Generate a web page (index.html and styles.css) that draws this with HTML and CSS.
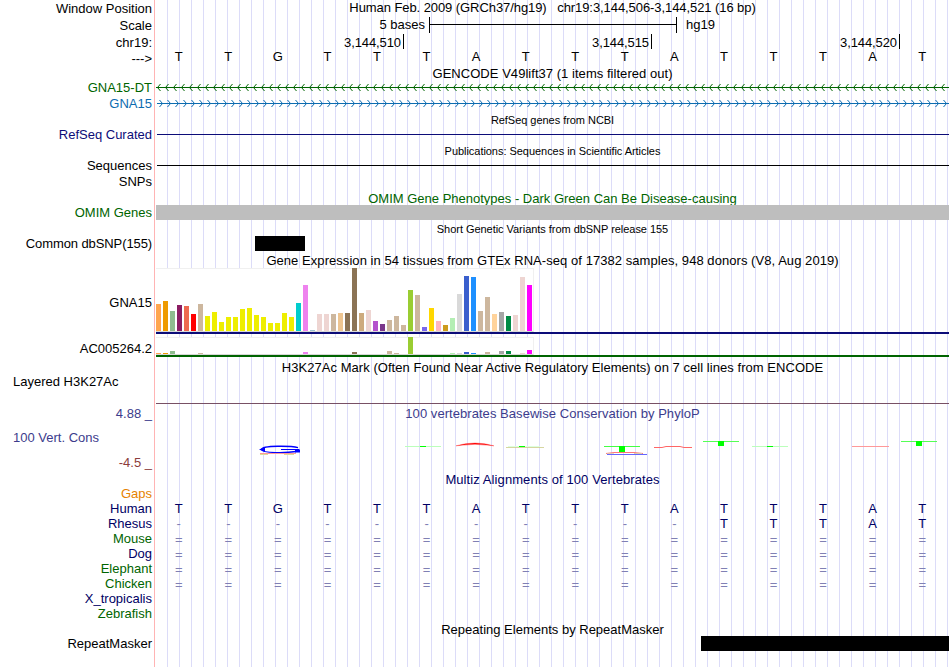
FILE: index.html
```html
<!DOCTYPE html>
<html lang="en">
<head>
    <meta charset="UTF-8">
    <title>Genome Browser</title>
    <link rel="stylesheet" href="styles.css">
</head>
<body>
<div class="browser">
    <div class="row h17 down1"><div class="label">Window Position</div><div class="title wide">Human Feb. 2009 (GRCh37/hg19)   chr19:3,144,506-3,144,521 (16 bp)</div></div>
    <div class="row h17 down1">
        <div class="label">Scale</div>
        <div class="track scale"><span class="from">5 bases</span><span class="ruler"></span><span>hg19</span></div>
    </div>
    <div class="row h15 down1">
        <div class="label">chr19:</div>
        <div class="track ticks"><span>3,144,510</span><span>3,144,515</span><span>3,144,520</span></div>
    </div>
    <div class="row h15 down2"><div class="label">---&gt;</div><div class="bases" data-seq="TTGTTTATTTATTTAT"></div></div>

    <div class="row h16 head"><div class="title gencode">GENCODE V49lift37 (1 items filtered out)</div></div>
    <div class="row h16 green">
        <div class="label">GNA15-DT</div>
        <svg class="track" width="793" height="16">
            <defs><pattern id="minus" x="1" width="8" height="16" patternUnits="userSpaceOnUse"><path d="M3.5 4L.5 7.5L3.5 11" fill="none" stroke="#006400"/></pattern></defs>
            <rect x="1" width="790" height="16" fill="url(#minus)"/>
            <rect y="7" width="793" height="1" fill="#006400"/>
        </svg>
    </div>
    <div class="row h15 blue">
        <div class="label">GNA15</div>
        <svg class="track" width="793" height="15">
            <defs><pattern id="plus" x="3" width="8" height="15" patternUnits="userSpaceOnUse"><path d="M.5 4L3.5 7.5L.5 11" fill="none" stroke="#0c6cb0"/></pattern></defs>
            <rect x="1" width="792" height="15" fill="url(#plus)"/>
            <rect x="1" y="7" width="792" height="1" fill="#0c6cb0"/>
        </svg>
    </div>

    <div class="row h16 head"><div class="title small">RefSeq genes from NCBI</div></div>
    <div class="row h15 navy"><div class="label">RefSeq Curated</div><div class="track"><div class="line"></div></div></div>

    <div class="row h16 head"><div class="title small">Publications: Sequences in Scientific Articles</div></div>
    <div class="row h16"><div class="label">Sequences</div><div class="track"><div class="line"></div></div></div>
    <div class="row h15"><div class="label">SNPs</div></div>

    <div class="row h16 head green"><div class="title omim">OMIM Gene Phenotypes - Dark Green Can Be Disease-causing</div></div>
    <div class="row h15 green"><div class="label">OMIM Genes</div><div class="track gray"></div></div>

    <div class="row h16 head"><div class="title small">Short Genetic Variants from dbSNP release 155</div></div>
    <div class="row h15"><div class="label dbsnp">Common dbSNP(155)</div><div class="track"><div class="item snp"></div></div></div>

    <div class="row h17 head"><div class="title gtex">Gene Expression in 54 tissues from GTEx RNA-seq of 17382 samples, 948 donors (V8, Aug 2019)</div></div>
    <div class="row expr">
        <div class="label">GNA15</div>
        <div class="track"><div class="bars" id="gna15"></div></div>
    </div>
    <div class="row expr low">
        <div class="label">AC005264.2</div>
        <div class="track"><div class="bars" id="ac005264"></div></div>
    </div>

    <div class="row h17 head down3"><div class="title h3k">H3K27Ac Mark (Often Found Near Active Regulatory Elements) on 7 cell lines from ENCODE</div></div>
    <div class="row h3k27ac"><div class="label">Layered H3K27Ac</div><div class="track"></div></div>

    <div class="row cons">
        <div class="label">
            <span class="max">4.88 _</span>
            <span class="name">100 Vert. Cons</span>
            <span class="min">-4.5 _</span>
        </div>
        <div class="track">
            <div class="title phylop">100 vertebrates Basewise Conservation by PhyloP</div>
            <svg width="793" height="50" viewBox="156 421 793 50">
                <!-- G -->
                <path d="M298 447.6C292 446 262 445 261.500 449.500C262 453.500 287 453 296 451.500" fill="none" stroke="#00f" stroke-width="1.300"/>
                <path d="M259 449.500L265 447V452Z" fill="#00f"/>
                <path d="M281 449.500H299" stroke="#00f"/>
                <rect x="295" y="449.500" width="5" height="3" fill="#00f"/>
                <path d="M260 453.500H296" stroke="#f99"/>
                <path d="M260 454.500H268M284 454.500H294" stroke="#dd9"/>
                <!-- T -->
                <path d="M405 446.500H441" stroke="#bfb"/>
                <path d="M420 446.500H426" stroke="#0f0"/>
                <!-- A -->
                <path d="M456 445.800Q475 440.200 494 445.800Q475 442.800 456 445.800Z" fill="#f00" stroke="#f00" stroke-width=".3"/>
                <path d="M506 447.500H544" stroke="#cc8" stroke-opacity=".8"/>
                <path d="M508 446.500H540" stroke="#dfd"/>
                <path d="M519 446.500H525" stroke="#0f0"/>
                <path d="M604 446.500H640" stroke="#4f4"/>
                <rect x="619" y="446" width="6" height="6" fill="#0f0"/>
                <path d="M606 453.500L614 452.500H634L643 453.500" fill="none" stroke="#f77"/>
                <path d="M607 453.800H614M634 453.500H642" stroke="#dca"/>
                <path d="M607 454.500H647" stroke="#66f"/>
                <path d="M654 447.500H662L666 446.500H680L684 447.500H692" fill="none" stroke="#f66"/>
                <path d="M703 441.500H739M901 441.500H937" stroke="#5f5"/>
                <path d="M718 441H724V446H718ZM916 441H922V446H916Z" fill="#0f0"/>
                <path d="M752 446.500H788" stroke="#bfb"/>
                <path d="M767 446.500H773" stroke="#0f0"/>
                <path d="M852 446.500H889" stroke="#f99"/>
            </svg>
        </div>
    </div>

    <div class="row h15 head dark down1"><div class="title multiz">Multiz Alignments of 100 Vertebrates</div></div>
    <div class="row h15 orange"><div class="label">Gaps</div></div>
    <div class="row h15 dark"><div class="label">Human</div><div class="bases" data-seq="TTGTTTATTTATTTAT"></div></div>
    <div class="row h15 dark"><div class="label">Rhesus</div><div class="bases" data-seq="-----------TTTAT"></div></div>
    <div class="row h15 green"><div class="label">Mouse</div><div class="bases" data-seq="================"></div></div>
    <div class="row h15 dark"><div class="label">Dog</div><div class="bases" data-seq="================"></div></div>
    <div class="row h15 green"><div class="label">Elephant</div><div class="bases" data-seq="================"></div></div>
    <div class="row h15 green"><div class="label">Chicken</div><div class="bases" data-seq="================"></div></div>
    <div class="row h15 dark"><div class="label">X_tropicalis</div></div>
    <div class="row h15 green"><div class="label">Zebrafish</div></div>

    <div class="row h15 head down1"><div class="title">Repeating Elements by RepeatMasker</div></div>
    <div class="row h15"><div class="label">RepeatMasker</div><div class="track"><div class="item repeat"></div></div></div>
</div>
<script>
    /*tissue colors, one for each GTEx bar*/
    var y = '#eeee00';
    var colors = ['#ffa54f','#ee9a00','#8fbc8f','#8b1c62','#ee6a50','#ff0000','#cdb79e',y,y,y,y,y,y,y,y,y,y,y,y,y,
        '#00cdcd','#ee82ee','#9ac0cd','#eed5d2','#eed5d2','#cdb79e','#eec591','#8b7355','#8b7355','#cdaa7d','#eed5d2',
        '#b452cd','#7a378b','#cdb79e','#cdb79e','#cdb79e','#9acd32','#cdb79e','#7a67ee','#ffd700','#ffb6c1','#cd9b1d',
        '#b4eeb4','#d9d9d9','#3a5fcd','#1e90ff','#cdb79e','#cdb79e','#ffd39b','#a6a6a6','#008b45','#eed5d2','#eed5d2','#ff00ff'];
    var gna15 = [27,30,20,26,25,17,27,15,19,9,14,14,22,23,16,14,8,8,18,14,28,46,1,17,17,17,18,18,63,18,21,10,7,11,15,6,41,36,4,23,10,6,13,37,55,54,20,34,17,19,15,16,54,46];
    var ac005264 = [1,1,3,0,0,0,1,0,0,0,0,0,0,0,0,0,0,0,0,0,0,2,0,0,0,0,0,0,2,0,0,0,0,3,1,0,17,0,0,0,0,0,1,1,2,1,0,2,0,3,3,0,1,4];

    function drawBars(id, values){
        var html = '';
        for(var i=0;i<values.length;i++){
            html += '<i style="height:' + values[i] + 'px;background:' + colors[i] + '"></i>';
        }
        document.getElementById(id).innerHTML = html;
    }
    drawBars('gna15', gna15);
    drawBars('ac005264', ac005264);

    /*one cell for each base*/
    var names = {'-': 'gap', '=': 'gap double'};
    var rows = document.getElementsByClassName('bases');
    for(var i=0;i<rows.length;i++){
        var seq = rows[i].getAttribute('data-seq');
        var html = '';
        for(var j=0;j<seq.length;j++){
            html += '<span class="' + (names[seq[j]] || 'base') + '">' + seq[j] + '</span>';
        }
        rows[i].innerHTML = html;
    }
</script>
</body>
</html>
```
FILE: styles.css
```css
*{margin: 0;padding: 0;box-sizing: border-box;}
body{background: #fff;overflow: hidden;}
.browser{width: 949px;height: 667px;font: 13px/15px "Liberation Sans", Arial, sans-serif;color: #000;
    background:
        linear-gradient(#ffb4b4,#ffb4b4) 154px 0/1px 100% no-repeat,
        linear-gradient(#fff,#fff) 0 0/156px 100% no-repeat,
        linear-gradient(to right,#dcdcf8 1px,transparent 1px) 167px 0/12px 100%;}
.row{display: flex;white-space: pre;}
.h15{height: 15px;}
.h16{height: 16px;}
.h17{height: 17px;}
.label{width: 156px;padding-right: 4px;text-align: right;flex: none;}
.down1 .label{padding-top: 1px;}
.down2 .label{padding-top: 2px;}
.track{width: 793px;flex: none;}
.title{width: 793px;text-align: center;flex: none;}
.head{padding: 2px 0 0 156px;}
.head.down1{padding-top: 1px;}
.head.down3{padding-top: 3px;}
.small{font-size: 11px;letter-spacing: -.04px;}
.wide{letter-spacing: -.075px;}
.gencode{letter-spacing: .04px;}
.gtex{letter-spacing: .055px;}
.h3k{letter-spacing: .045px;}
.multiz{letter-spacing: .09px;}
.dbsnp{letter-spacing: -.1px;}

.green{color: #006400;}
.blue{color: #0c6cb0;}
.navy{color: #0c0c78;}
.dark{color: #000064;}
.orange{color: #e68200;}

/*ruler*/
.scale{display: flex;}
.scale .from{width: 269px;text-align: right;margin-right: 4px;}
.ruler{width: 248px;height: 16px;margin-right: 9px;border: solid #000;border-width: 0 1px;background: linear-gradient(#000,#000) 0 7px/100% 1px no-repeat;}
.ticks{display: flex;}
.ticks span{width: 248px;padding: 1px 2px 0 0;text-align: right;letter-spacing: -.1px;border-right: 1px solid #000;}
.bases{width: 793px;margin-left: -2px;display: grid;grid-template-columns: repeat(16,1fr);text-align: center;flex: none;}
.gap{color: #8080b4;}
.double{padding-top: 1px;}

/*track items*/
.line{height: 1px;margin: 7px 0 0 1px;background: currentColor;}
.gray{background: #bebebe;}
.item{height: 15px;background: #000;}
.snp{width: 50px;margin-left: 99px;}
.repeat{width: 248px;margin-left: 545px;}

/*gtex*/
.expr{height: 66px;}
.expr .label{padding-top: 27px;}
.expr .track{border-bottom: 2px solid #0c0c78;}
.bars{width: 378px;height: 64px;display: flex;align-items: flex-end;gap: 2px;background: #fff;border: solid #f0f0f0;border-width: 1px 1px 0 0;border-bottom: 1px solid #d8d8d8;}
.bars i{width: 5px;flex: none;}
.expr.low{height: 23px;}
.low .label{padding-top: 7px;}
.low .track{padding-top: 3px;border-color: #006400;}
.low .bars{height: 18px;}

.h3k27ac{height: 47px;}
.h3k27ac .label{text-align: left;padding-left: 13px;}
.h3k27ac .track{height: 30px;border-bottom: 1px solid #785064;}

/*conservation*/
.cons{height: 67px;margin-top: -17px;}
.cons .label{display: flex;flex-direction: column;padding-top: 2px;color: #3c3c8c;}
.cons .name{text-align: left;padding: 9px 0 10px 13px;}
.cons .min{color: #8c3c3c;}
.cons .track{white-space: normal;}
.cons svg{display: block;}
.phylop{padding-top: 2px;height: 17px;color: #3c3c8c;letter-spacing: .05px;}
```
